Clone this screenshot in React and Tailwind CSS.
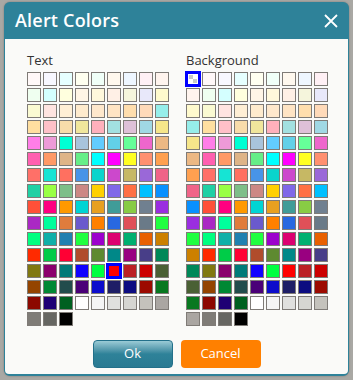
const colors = [
  '#fff8f8', '#f8f8ff', '#e6ffff', '#fffff0', '#f0fff8', '#fff8ee', '#eef6ff', '#fff0f5', '#fff4ee',
  '#effff0', '#d4ffff', '#ffffde', '#fff5e6', '#fff8dc', '#fff0e6', '#f5f5dc', '#e8e8fa', '#fffacd',
  '#fafad2', '#ffe4e1', '#ffefd5', '#ffebcd', '#ffe8cc', '#ffe4c4', '#ffdead', '#ffdab9', '#96eeea',
  '#ffdfa0', '#ffc0c8', '#f8dcaa', '#f0e69c', '#ffb0bc', '#a2e0e0', '#dec0d8', '#a0d8e4', '#f6e68a',
  '#ff7ee8', '#ee9ad8', '#00ffd4', '#a8c4dc', '#62ccff', '#62d0e8', '#66ff99', '#ee66cc', '#ecb884',
  '#ff60b0', '#ff9966', '#deb487', '#66ee88', '#00ffff', '#ff00ff', '#ffff22', '#ff9070', '#ffa050',
  '#ff7068', '#16e4d4', '#ff7060', '#4894e8', '#0ad4cc', '#cc48cc', '#c6b864', '#9a68d8', '#f06488',
  '#20d0a4', '#99ff44', '#7ebe88', '#cc8884', '#ffd000', '#8068e8', '#ff7044', '#00c0ff', '#0890ff',
  '#ff5038', '#ff0080', '#ff9900', '#00d4d4', '#e8a020', '#409c98', '#88cc44', '#708090', '#9a2ee0',
  '#aa28c4', '#00ff9c', '#e07c3c', '#6a5acd', '#ff8000', '#2868e0', '#e05058', '#6a7a88', '#20ff40',
  '#00ff80', '#10b0a8', '#2080b0', '#20ff40', '#9c00cc', '#dc0070', '#00b070', '#e86000', '#cc8000',
  '#ff2a00', '#00cc48', '#ff0034', '#b04c2c', '#5e8a30', '#008888', '#990080', '#483e88', '#008858',
  '#807810', '#8a006c', '#007a78', '#1000ff', '#00ff40', '#ff0000', '#bb2024', '#cc0000', '#4a6034',
  '#944400', '#008834', '#224c4c', '#4a0078', '#0c0ccc', '#1e1e66', '#0c0c80', '#9c0a00', '#087820',
  '#8c0800', '#1e0074', '#006020', '#ffffff', '#f5f5f5', '#e0e0de', '#d6d6d2', '#c4c2bc', '#aaa6a2',
  '#7f7c77', '#666662', '#000000',
];

function Checker() {
  return (
    <div className="grid grid-cols-2 w-[8px] h-[8px]">
      <div className="bg-[#c8c8c8]" />
      <div className="bg-white" />
      <div className="bg-white" />
      <div className="bg-[#c8c8c8]" />
    </div>
  );
}

function Swatch({ color, selected }) {
  if (selected) {
    return (
      <div className="w-[16px] h-[16px] -m-[1px] border-[3px] border-[#0000ff] bg-white flex items-center justify-center">
        {color ? <div className="w-[10px] h-[10px]" style={{ background: color }} /> : <Checker />}
      </div>
    );
  }
  return <div className="w-[14px] h-[14px] border border-[#7f7b77]" style={{ background: color }} />;
}

function Palette({ label, items, selected }) {
  return (
    <div className="flex flex-col">
      <div className="text-[13px] leading-[16px] text-[#333] h-[20px]">{label}</div>
      <div className="grid grid-cols-[repeat(9,14px)] gap-[2px]">
        {items.map((c, i) => (
          <Swatch key={i} color={c} selected={i === selected} />
        ))}
      </div>
    </div>
  );
}

export default function App() {
  return (
    <div
      className="h-[380px] w-[353px] bg-[#a9a8a4] pt-[2px] pl-[4px] overflow-hidden"
      style={{ fontFamily: '"Open Sans", "Noto Sans", sans-serif' }}
    >
      <div className="w-[345px] h-[374px] bg-[#2e8299] rounded-[6px] flex flex-col px-[1px] pb-[2px] shadow-[0_0_2px_rgba(0,0,0,0.3)]">
        <div className="h-[37px] flex items-center justify-between pl-[10px] pr-[10px]">
          <span className="text-white text-[18px] font-semibold tracking-[0.2px]">Alert Colors</span>
          <svg width="14" height="14" viewBox="0 0 14 14" className="mt-[1px]">
            <path d="M1 1 L13 13 M13 1 L1 13" stroke="white" strokeWidth="1.8" />
          </svg>
        </div>
        <div className="flex-1 bg-[#fafaf8] rounded-b-[4px] flex flex-col pl-[22px] pt-[13px]">
          <div className="flex gap-[17px]">
            <Palette label="Text" items={colors} selected={113} />
            <Palette label="Background" items={[null, ...colors]} selected={0} />
          </div>
          <div className="flex justify-center gap-[8px] mt-[14px] -ml-[22px]">
            <button className="w-[80px] h-[28px] rounded-[4px] border border-[#23708a] bg-gradient-to-b from-[#9acbd6] via-[#2e8299] to-[#2a7a92] text-white text-[13px]">
              Ok
            </button>
            <button className="w-[80px] h-[28px] rounded-[4px] bg-[#ff8000] text-white text-[13px]">
              Cancel
            </button>
          </div>
        </div>
      </div>
    </div>
  );
}
